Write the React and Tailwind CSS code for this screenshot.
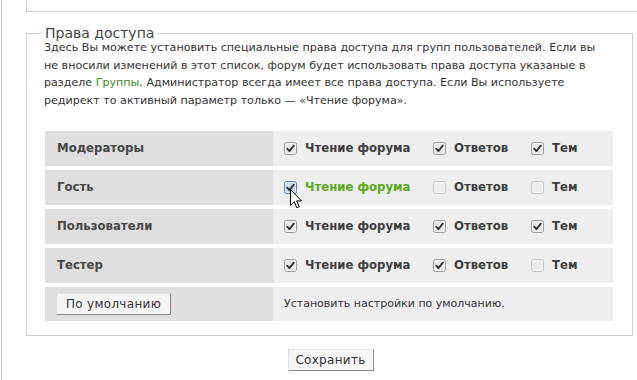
import React from "react";

function Box({ state }) {
  const stroke = state === "hover" ? "#5b7fbf" : state === "off" ? "#c6c6c6" : "#9c9c9c";
  const fill = state === "hover" ? "#c9d9f2" : state === "off" ? "#ececec" : "#e9e9e9";
  return (
    <svg width="13" height="13" viewBox="0 0 13 13" className="shrink-0">
      <rect x="0.5" y="0.5" width="12" height="12" rx="2" fill={fill} stroke={stroke} />
      <rect x="1.5" y="1.5" width="10" height="10" rx="1.5" fill="none" stroke="#f6f6f6" strokeOpacity="0.7" />
      {state !== "off" && (
        <path d="M3.2 6.6 L5.4 9.1 L9.8 3.6" fill="none" stroke="#2f2f2f" strokeWidth="1.8" strokeLinecap="round" strokeLinejoin="round" />
      )}
    </svg>
  );
}

function Check({ state, label, green, w }) {
  return (
    <div className={"flex items-center gap-[8px] " + w}>
      <Box state={state} />
      <span className={green ? "text-[#58a81c]" : "text-[#3d3d3d]"}>{label}</span>
    </div>
  );
}

const rows = [
  { name: "Модераторы", s: ["on", "on", "on"] },
  { name: "Гость", s: ["hover", "off", "off"], green: true },
  { name: "Пользователи", s: ["on", "on", "on"] },
  { name: "Тестер", s: ["on", "on", "off"] },
];

export default function App() {
  return (
    <div className="relative w-[637px] h-[380px] bg-white overflow-hidden text-[#333] font-['DejaVu_Sans',sans-serif]">
      <div className="flex h-full">
        <div className="ml-px w-px bg-[#cfcfcf]" />
        <div className="ml-[24px] flex-1 flex flex-col">
          <div className="h-[12px] border-l border-b border-[#cccccc]" />
          <fieldset className="mt-[14px] w-[607px] border border-[#cccccc] px-[17px] pb-[14px]">
            <legend className="ml-[-3px] px-[4px] text-[14px] leading-[14px] text-[#444] font-normal">
              Права доступа
            </legend>
            <p className="mt-[-1px] text-[11.1px] leading-[17.7px] whitespace-nowrap text-[#333]">
              Здесь Вы можете установить специальные права доступа для групп пользователей. Если вы
              <br />
              не вносили изменений в этот список, форум будет использовать права доступа указаные в
              <br />
              разделе <span className="text-[#3f8a1a]">Группы</span>. Администратор всегда имеет все права доступа. Если Вы используете
              <br />
              редирект то активный параметр только — «Чтение форума».
            </p>
            <div className="mt-[21px] ml-px grid grid-cols-[228px_340px] gap-y-[4px]">
              {rows.map((r) => (
                <React.Fragment key={r.name}>
                  <div className="h-[35px] bg-[#dfdfdf] pl-[12px] flex items-center text-[11.7px] font-bold text-[#454545]">
                    {r.name}
                  </div>
                  <div className="h-[35px] bg-[#eeeeee] pl-[11px] flex items-center text-[11.7px] font-bold">
                    <Check state={r.s[0]} label="Чтение форума" green={r.green} w="w-[149px]" />
                    <Check state={r.s[1]} label="Ответов" w="w-[98px]" />
                    <Check state={r.s[2]} label="Тем" w="" />
                  </div>
                </React.Fragment>
              ))}
              <div className="h-[34px] bg-[#dfdfdf] pl-[11px] flex items-center">
                <button className="h-[22px] w-[115px] bg-[#f5f5f5] border border-[#e2e2e2] border-r-[#8a8a8a] border-b-[#8a8a8a] text-[12px] text-[#333] leading-none tracking-[0.3px]">
                  По умолчанию
                </button>
              </div>
              <div className="h-[34px] bg-[#eeeeee] pl-[11px] flex items-center text-[11px] text-[#333]">
                Установить настройки по умолчанию.
              </div>
            </div>
          </fieldset>
          <div className="w-[607px] flex justify-center mt-[13px] pl-[2px]">
            <button className="h-[22px] w-[86px] bg-[#f5f5f5] border border-[#e2e2e2] border-r-[#8a8a8a] border-b-[#8a8a8a] text-[12px] text-[#333] leading-none tracking-[0.3px]">
              Сохранить
            </button>
          </div>
        </div>
      </div>
      <svg className="absolute left-[290px] top-[189px]" width="13" height="21" viewBox="0 0 13 21">
        <path d="M0.5 0.5 L0.5 16.5 L4.3 12.8 L6.8 18.7 L9.2 17.7 L6.7 11.9 L11.5 11.9 Z" fill="#fff" stroke="#000" strokeWidth="1" strokeLinejoin="miter" />
      </svg>
    </div>
  );
}
